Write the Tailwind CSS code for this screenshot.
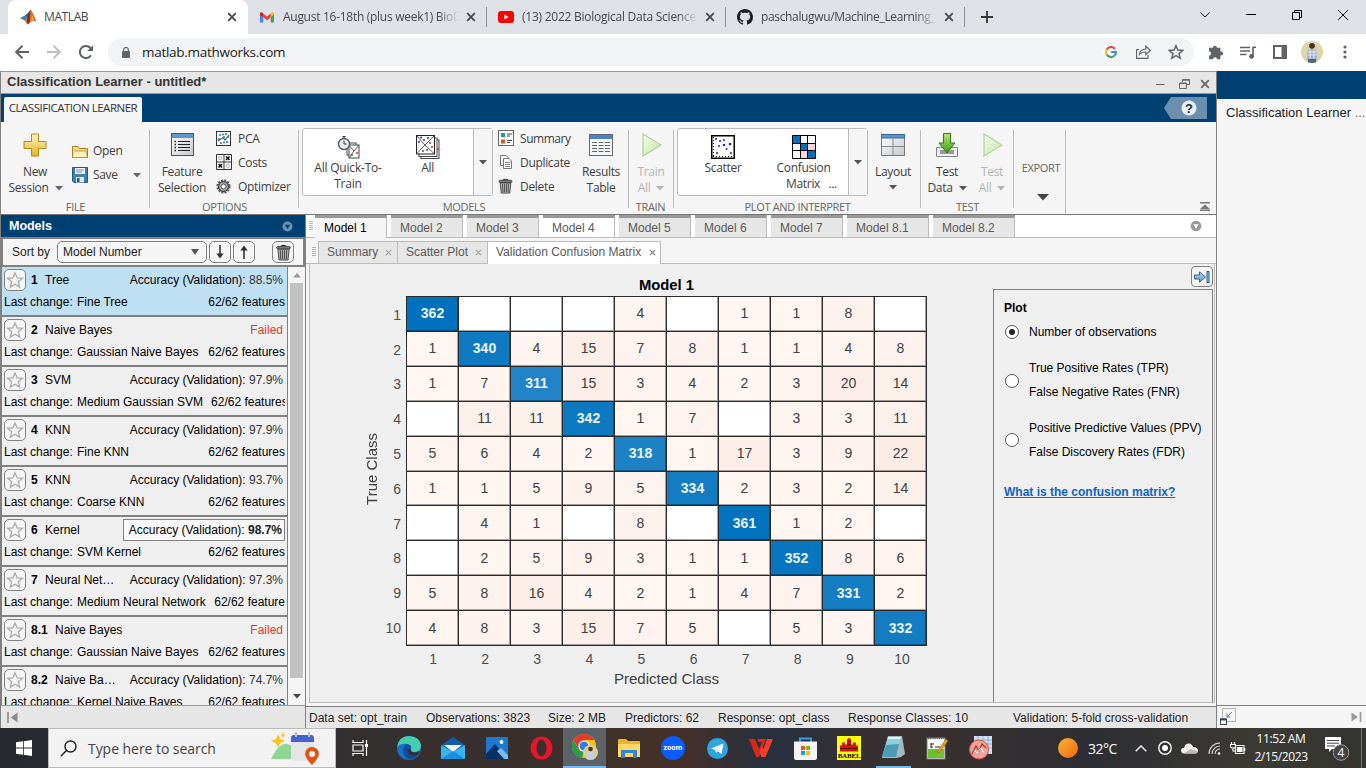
<!DOCTYPE html>
<html lang="en">
<head>
<meta charset="utf-8">
<title>MATLAB</title>
<script src="https://cdn.jsdelivr.net/npm/@tailwindcss/browser@4"></script>
</head>
<body class="w-[1366px] h-[768px] overflow-hidden bg-white font-['Liberation_Sans',Arial,sans-serif] text-[12px] text-black">
<svg width="0" height="0" class="absolute">
  <defs>
    <symbol id="x" viewBox="0 0 10 10"><path d="M1.2 1.2 8.8 8.8M8.8 1.2 1.2 8.8" stroke="currentColor" stroke-width="1.8" fill="none"/></symbol>
    <symbol id="down" viewBox="0 0 8 5"><path d="M0 0H8L4 4.5Z" fill="currentColor"/></symbol>
    <symbol id="star" viewBox="0 0 24 24"><path d="M12 2.5 14.8 9.1 22 9.7 16.5 14.4 18.2 21.4 12 17.6 5.8 21.4 7.5 14.4 2 9.7 9.2 9.1Z" fill="none" stroke="currentColor" stroke-width="1.7"/></symbol>
    <symbol id="grip" viewBox="0 0 4 10"><path d="M0 .5H4M0 2.5H4M0 4.5H4M0 6.5H4M0 8.5H4" stroke="#b5b5b5" stroke-width="1"/></symbol>
    <symbol id="trash" viewBox="0 0 16 18"><path d="M5 2.5Q8 .2 11 2.5" fill="none" stroke="#333" stroke-width="1.2"/><rect x=".7" y="2.5" width="14.6" height="2.6" rx="1.2" fill="#777" stroke="#333" stroke-width=".8"/><path d="M2 5.5H14L12.8 17H3.2Z" fill="#b4b4b4" stroke="#333" stroke-width=".9"/><path d="M4.6 6.5 5 16M6.9 6.5V16M9.1 6.5V16M11.4 6.5 11 16" stroke="#444" stroke-width="1"/></symbol>
    <linearGradient id="gold" x1="0" y1="0" x2="0" y2="1"><stop offset="0" stop-color="#fff7c8"/><stop offset="1" stop-color="#e8b21c"/></linearGradient>
    <linearGradient id="grn" x1="0" y1="0" x2="1" y2="1"><stop offset="0" stop-color="#f2fbe8"/><stop offset="1" stop-color="#c4e5a5"/></linearGradient>
    <linearGradient id="dl" x1="0" y1="0" x2="0" y2="1"><stop offset="0" stop-color="#b9e878"/><stop offset="1" stop-color="#3f9a17"/></linearGradient>
    <linearGradient id="blu" x1="0" y1="0" x2="0" y2="1"><stop offset="0" stop-color="#b9d9ef"/><stop offset="1" stop-color="#5f9bc8"/></linearGradient>
    <linearGradient id="wht" x1="0" y1="0" x2="1" y2="1"><stop offset="0" stop-color="#fff"/><stop offset="1" stop-color="#c4c8cc"/></linearGradient>
    <symbol id="play" viewBox="0 0 20 24"><path d="M1 1 19 12 1 23Z" fill="url(#grn)" stroke="#b3cf9c" stroke-width="1.2"/></symbol>
    <symbol id="save" viewBox="0 0 16 16"><path d="M.5.5H15.5V15.5H2L.5 14Z" fill="#3e7fb0" stroke="#26587f"/><rect x="3" y="1" width="10" height="6" fill="#eef4f8"/><path d="M4 3H12M4 5H10" stroke="#88a" /><rect x="4" y="10" width="8" height="5.5" fill="#dfe8ee"/><rect x="5" y="11" width="2.5" height="4" fill="#26587f"/></symbol>
  </defs>
</svg>

<!-- Browser tab strip -->
<header class="h-[34px] w-full flex bg-[#dee1e6] font-['Open_Sans',sans-serif] text-[12px] text-[#45494d]">
  <div class="ml-[8px] w-[240px] h-full rounded-t-[8px] bg-white flex items-center pl-[12px] pr-[11px]">
    <svg width="17" height="16" viewBox="0 0 17 16"><path d="M0 9 5 6.5 8 9 4.5 11.5Z" fill="#3b7fb5"/><path d="M5 6.5Q8 5 10.5.5L8.5 9.5Z" fill="#1c5c8a"/><path d="M10.5.5Q13 3 16.5 13 13 10.5 10 13.5L7.5 15.5 4.5 11.5 8.5 8.5Z" fill="#e4682a"/><path d="M10.5.5 9.5 13.5 7.5 15.5 7 10Z" fill="#8f2412"/><path d="M12 5 13.5 11 11.5 11.5Z" fill="#f9b54c"/></svg>
    <span class="ml-[7px] flex-1 tracking-[-0.4px]">MATLAB</span>
    <svg width="10" height="10"><use href="#x"/></svg>
  </div>
  <div class="w-[239px] flex items-center pl-[12px] pr-[10px] border-r border-[#8d9196] h-[20px] mt-[7px]">
    <svg width="14" height="11" viewBox="0 0 14 11"><path d="M0 1.5V10.6H3.2V4Z" fill="#4285f4"/><path d="M14 1.5V10.6H10.8V4Z" fill="#34a853"/><path d="M3.2 1.6 7 4.6 10.8 1.6V5.2L7 8.2 3.2 5.2Z" fill="#ea4335"/><path d="M0 1.5Q0 0 1.7.3L3.2 1.6V5.2L0 2.8Z" fill="#c5221f"/><path d="M14 1.5Q14 0 12.3.3L10.8 1.6V5.2L14 2.8Z" fill="#fbbc04"/></svg>
    <span class="ml-[9px] w-[176px] overflow-hidden whitespace-nowrap tracking-[-0.28px] [mask-image:linear-gradient(90deg,#000_88%,transparent)]">August 16-18th (plus week1) BioD</span>
    <svg class="ml-auto" width="10" height="10"><use href="#x"/></svg>
  </div>
  <div class="w-[239px] flex items-center pl-[11px] pr-[10px] border-r border-[#8d9196] h-[20px] mt-[7px]">
    <svg width="16" height="12" viewBox="0 0 16 12"><rect width="16" height="12" rx="3" fill="#f00"/><path d="M6.3 3.5 10.5 6 6.3 8.5Z" fill="#fff"/></svg>
    <span class="ml-[8px] w-[176px] overflow-hidden whitespace-nowrap tracking-[-0.25px] [mask-image:linear-gradient(90deg,#000_88%,transparent)]">(13) 2022 Biological Data Science</span>
    <svg class="ml-auto" width="10" height="10"><use href="#x"/></svg>
  </div>
  <div class="w-[239px] flex items-center pl-[11px] pr-[10px] border-r border-[#8d9196] h-[20px] mt-[7px]">
    <svg width="16" height="16" viewBox="0 0 16 16"><path fill="#1b1f24" d="M8 0C3.58 0 0 3.58 0 8c0 3.54 2.29 6.53 5.47 7.59.4.07.55-.17.55-.38 0-.19-.01-.82-.01-1.49-2.01.37-2.53-.49-2.69-.94-.09-.23-.48-.94-.82-1.13-.28-.15-.68-.52-.01-.53.63-.01 1.08.58 1.23.82.72 1.21 1.87.87 2.33.66.07-.52.28-.87.51-1.07-1.78-.2-3.64-.89-3.64-3.95 0-.87.31-1.59.82-2.15-.08-.2-.36-1.02.08-2.12 0 0 .67-.21 2.2.82.64-.18 1.32-.27 2-.27s1.36.09 2 .27c1.53-1.04 2.2-.82 2.2-.82.44 1.1.16 1.92.08 2.12.51.56.82 1.27.82 2.15 0 3.07-1.87 3.75-3.65 3.95.29.25.54.73.54 1.48 0 1.07-.01 1.93-.01 2.2 0 .21.15.46.55.38A8.01 8.01 0 0 0 16 8c0-4.42-3.58-8-8-8Z"/></svg>
    <span class="ml-[8px] w-[176px] overflow-hidden whitespace-nowrap tracking-[-0.35px] [mask-image:linear-gradient(90deg,#000_88%,transparent)]">paschalugwu/Machine_Learning_</span>
    <svg class="ml-auto" width="10" height="10"><use href="#x"/></svg>
  </div>
  <div class="flex items-center pl-[16px] text-[#333]"><svg width="12" height="12" viewBox="0 0 12 12"><path d="M6 0V12M0 6H12" stroke="currentColor" stroke-width="1.8"/></svg></div>
  <div class="ml-auto h-[29px] flex items-center text-black">
    <div class="w-[46px] flex justify-center"><svg width="10" height="6" viewBox="0 0 10 6"><path d="M.5.5 5 5 9.5.5" fill="none" stroke="currentColor"/></svg></div>
    <div class="w-[46px] flex justify-center"><svg width="10" height="1"><rect width="10" height="1"/></svg></div>
    <div class="w-[46px] flex justify-center"><svg width="10" height="10" viewBox="0 0 10 10"><path d="M.5 2.5H7.5V9.5H.5ZM2.5 2V.5H9.5V7.5H8" fill="none" stroke="currentColor"/></svg></div>
    <div class="w-[46px] flex justify-center"><svg width="10" height="10" viewBox="0 0 10 10"><path d="M0 0 10 10M10 0 0 10" stroke="currentColor"/></svg></div>
  </div>
</header>

<!-- Address bar -->
<div class="h-[37px] w-full flex items-center bg-white pl-[15px] pb-[1px] text-[#5f6368]">
  <svg width="14" height="14" viewBox="0 0 14 14"><path d="M7.5.8 1.2 7l6.3 6.2M1.2 7H14" fill="none" stroke="currentColor" stroke-width="1.9"/></svg>
  <svg class="ml-[18px] text-[#bdc0c3]" width="14" height="14" viewBox="0 0 14 14"><path d="M6.5.8 12.8 7l-6.3 6.2M12.8 7H0" fill="none" stroke="currentColor" stroke-width="1.9"/></svg>
  <svg class="ml-[18px]" width="15" height="14" viewBox="0 0 15 14"><path d="M12 10.2A6 6 0 1 1 11.4 3L13 4.6" fill="none" stroke="currentColor" stroke-width="2"/><path d="M14 .2V6H8.2Z" fill="currentColor"/></svg>
  <div class="ml-[14px] w-[1086px] h-[28px] rounded-full bg-[#f1f3f4] flex items-center pl-[14px] pr-[10px]">
    <svg width="8" height="11" viewBox="0 0 8 11"><rect y="4" width="8" height="7" rx="1" fill="currentColor"/><path d="M1.7 4.5V2.8a2.3 2.3 0 0 1 4.6 0V4.5" fill="none" stroke="currentColor" stroke-width="1.2"/></svg>
    <span class="ml-[12px] font-['Open_Sans',sans-serif] text-[13.5px] tracking-[-0.28px] text-[#202124]">matlab.mathworks.com</span>
    <div class="ml-auto flex items-center gap-[17px]">
      <span class="w-[16px] h-[16px] rounded-full bg-white flex items-center justify-center"><svg width="12" height="12" viewBox="0 0 12 12" fill="none" stroke-width="2.1"><path d="M10 2.9A5 5 0 0 0 1.7 3.6" stroke="#ea4335"/><path d="M1.7 3.6A5 5 0 0 0 1.7 8.4" stroke="#fbbc05"/><path d="M1.7 8.4A5 5 0 0 0 9.3 9.8" stroke="#34a853"/><path d="M9.3 9.8A5 5 0 0 0 11 6H6.2" stroke="#4285f4"/></svg></span>
      <svg width="15" height="14" viewBox="0 0 15 14" fill="none" stroke="currentColor" stroke-width="1.1"><path d="M3 4.5H.6V13.4H12V10"/><path d="M3.5 9.5Q4 4.3 9.8 4V1L14.4 5.5 9.8 9.5V7Q6 6.6 3.5 9.5Z"/></svg>
      <svg width="16" height="16" viewBox="0 0 24 24"><path d="M12 2.500 14.800 9.100 22 9.700 16.500 14.400 18.200 21.400 12 17.600 5.800 21.400 7.500 14.400 2 9.700 9.200 9.100Z" fill="none" stroke="currentColor" stroke-width="2.200"/></svg>
    </div>
  </div>
  <div class="flex items-center ml-[14px]">
    <svg width="16" height="16" viewBox="0 0 15 15"><path d="M1 3.500H4.600A1.900 1.900 0 1 1 8.400 3.500H11.600V7A1.900 1.900 0 1 1 11.600 10.600V14.300H8.500A1.900 1.900 0 1 0 4.700 14.300H1V11A1.900 1.900 0 1 0 1 7Z" fill="currentColor"/></svg>
    <svg class="ml-[16px]" width="16" height="13" viewBox="0 0 16 13"><path d="M0 1.500H10M0 5H10M0 8.500H6.500" stroke="currentColor" stroke-width="1.500"/><path d="M13 11V1.200H16" fill="none" stroke="currentColor" stroke-width="1.600"/><circle cx="11.500" cy="10.400" r="2.300" fill="currentColor"/></svg>
    <svg class="ml-[17px]" width="14" height="14" viewBox="0 0 14 14"><rect x="1" y="1" width="12" height="12" fill="none" stroke="currentColor" stroke-width="2"/><rect x="8.500" y="1" width="4.500" height="12" fill="currentColor"/></svg>
    <svg class="ml-[14px]" width="22" height="22" viewBox="0 0 22 22"><clipPath id="av"><circle cx="11" cy="11" r="11"/></clipPath><g clip-path="url(#av)"><rect width="22" height="22" fill="#ddd6a4"/><path d="M6 19V11Q6 8 11 8T16 11V19Z" fill="#a3b0d8"/><path d="M6.500 11H16M6.500 14H16M9 8.500V18M13 8.500V18" stroke="#e8ecf8" stroke-width=".9"/><circle cx="11" cy="4.800" r="2.900" fill="#4a3228"/><path d="M7 18H15V22H7Z" fill="#57607e"/></g></svg>
    <svg class="ml-[20px]" width="4" height="14" viewBox="0 0 4 14" fill="currentColor"><circle cx="2" cy="2" r="1.600"/><circle cx="2" cy="7" r="1.600"/><circle cx="2" cy="12" r="1.600"/></svg>
  </div>
</div>

<div class="h-[657px] w-full flex">
<!-- Classification Learner window -->
<div class="w-[1217px] h-full flex flex-col border-l border-r border-[#808080]">
  <div class="h-[23px] shrink-0 bg-[#e6e6e6] border-t border-b border-[#999] flex items-center pl-[6px] pr-[6px] text-[#333]">
    <span class="text-[13px] font-bold pb-[1px]">Classification Learner - untitled*</span>
    <div class="ml-auto flex items-center gap-[12px] pt-[3px] text-[#666]">
      <svg width="9" height="9" viewBox="0 0 9 9"><path d="M0 4.500H8.500" stroke="currentColor"/></svg>
      <svg class="ml-[2px] -mr-[2px]" width="11" height="10" viewBox="0 0 11 10" fill="none" stroke="currentColor"><path d="M3.500 3V.5H10.500V5.500H8"/><path d="M.5 4H7.500V9.500H.5ZM.5 4.600H7.500M3.500 1.200H10.500" /></svg>
      <svg width="10" height="10"><use href="#x"/></svg>
    </div>
  </div>
  <div class="h-[28px] shrink-0 bg-[#004073] flex items-end pl-[3px] pr-[9px]">
    <div class="w-[138px] h-[25px] rounded-t-[2px] bg-[#f5f5f5] flex items-center justify-center font-['Open_Sans',sans-serif] text-[11.500px] tracking-[-0.480px] text-[#333] whitespace-nowrap pb-[3px]">CLASSIFICATION LEARNER</div>
    <svg class="ml-auto mb-[3px]" width="43" height="22" viewBox="0 0 43 22"><path d="M0 11 7 0H43V22H7Z" fill="#6c8fae"/><circle cx="25" cy="11" r="7.500" fill="#fff"/><circle cx="25" cy="11" r="7.500" fill="#3a6d96" opacity=".12"/><text x="25" y="15.700" text-anchor="middle" font-family="Liberation Sans" font-size="13" font-weight="bold" fill="#20303e">?</text></svg>
  </div>

  <!-- Ribbon -->
  <div class="h-[93px] shrink-0 bg-[#f5f5f5] border-b border-[#777] flex font-['Open_Sans',sans-serif] text-[12px] leading-[16px] tracking-[-0.320px] text-[#404040]">
    <section class="w-[149px] flex flex-col">
      <div class="h-[78px] flex border-r border-[#bbb] mt-[8px]">
        <div class="w-[68px] -mt-[8px] pt-[11px] flex flex-col items-center">
          <svg width="24" height="24" viewBox="0 0 24 24"><path d="M8.500 1H15.500V8.500H23V15.500H15.500V23H8.500V15.500H1V8.500H8.500Z" fill="url(#gold)" stroke="#b5861a"/></svg>
          <span class="mt-[7px]">New</span><span class="flex items-center gap-[6px] pl-[1px]">Session <svg width="8" height="5" class="text-[#666]"><use href="#down"/></svg></span>
        </div>
        <div class="flex flex-col gap-[8px] pt-[13px] pl-[3px]">
          <div class="flex items-center gap-[5px]"><svg width="16" height="13" viewBox="0 0 16 13"><path d="M.5 1.500H6L7.500 3.500H15.500V12.500H.5Z" fill="#f4d67d" stroke="#a8822a"/><path d="M3 6H14L15.500 12.500H.8" fill="#fdf2b8" stroke="#a8822a" stroke-width=".7"/></svg>Open</div>
          <div class="flex items-center gap-[5px]"><svg width="16" height="16"><use href="#save"/></svg>Save<svg width="8" height="5" class="text-[#666] ml-[10px]"><use href="#down"/></svg></div>
        </div>
      </div>
      <div class="h-[14px] -mt-[8px] text-[11px] leading-[13px] text-center text-[#666]">FILE</div>
    </section>
    <section class="w-[149px] flex flex-col">
      <div class="h-[78px] flex border-r border-[#bbb] mt-[8px]">
        <div class="w-[64px] -mt-[8px] pt-[11px] flex flex-col items-center">
          <svg width="23" height="23" viewBox="0 0 23 23"><rect x=".5" y=".5" width="22" height="22" fill="url(#wht)" stroke="#4a5560"/><rect x="1" y="1" width="21" height="4" fill="#5f94cc"/><path d="M7 8.500H19M7 11.500H19M7 14.500H19M7 17.500H19" stroke="#222" stroke-width="1.200"/><path d="M3.500 8.500H5M3.500 11.500H5M3.500 14.500H5M3.500 17.500H5" stroke="#222" stroke-width="1.300"/></svg>
          <span class="mt-[8px]">Feature</span><span>Selection</span>
        </div>
        <div class="flex flex-col gap-[8px] pl-[2px]">
          <div class="flex items-center gap-[7px]"><svg width="15" height="15" viewBox="0 0 15 15"><rect x=".5" y=".5" width="14" height="14" fill="#fff" stroke="#333"/><path d="M2 10 7 6.500 9 9 13 4" fill="none" stroke="#555" stroke-width="1.200"/><g fill="#1478c8"><circle cx="4" cy="4" r="1"/><circle cx="7" cy="3.500" r="1"/><circle cx="10" cy="3" r="1"/><circle cx="12" cy="6" r="1"/><circle cx="3" cy="8" r="1"/><circle cx="5" cy="12" r="1"/><circle cx="8" cy="11.500" r="1"/><circle cx="11" cy="11" r="1"/><circle cx="8" cy="6" r="1"/></g></svg><span class="pt-[1px] -mb-[1px]">PCA</span></div>
          <div class="flex items-center gap-[6px]"><svg width="16" height="16" viewBox="0 0 16 16"><path d="M.5.5H15.500V15.500H.5ZM8 .5V15.500M.5 8H15.500" fill="#fff" stroke="#333"/><circle cx="4.200" cy="4.200" r="1.600" fill="none" stroke="#aaa"/><circle cx="11.800" cy="11.800" r="1.600" fill="none" stroke="#aaa"/><path d="M10 2.500 13.500 6M13.500 2.500 10 6M2.500 10 6 13.500M6 10 2.500 13.500" stroke="#000" stroke-width="1.400"/></svg><span class="pt-[1px] -mb-[1px]">Costs</span></div>
          <div class="flex items-center gap-[7px]"><svg width="15" height="15" viewBox="0 0 15 15"><circle cx="7.500" cy="7.500" r="5" fill="#bbb" stroke="#444" stroke-width="1.400"/><circle cx="7.500" cy="7.500" r="6.400" fill="none" stroke="#444" stroke-width="1.300" stroke-dasharray="2 1.350"/><circle cx="7.500" cy="7.500" r="2.600" fill="#f5f5f5" stroke="#444"/></svg><span class="pt-[1px] -mb-[1px]">Optimizer</span></div>
        </div>
      </div>
      <div class="h-[14px] -mt-[8px] text-[11px] leading-[13px] text-center text-[#666]">OPTIONS</div>
    </section>
    <section class="w-[330px] flex flex-col">
      <div class="h-[78px] flex border-r border-[#bbb] mt-[8px]">
        <div class="ml-[3px] -mt-[2px] w-[191px] h-[68px] border border-[#bbb] rounded-[3px] bg-white flex">
          <div class="w-[90px] pt-[6px] flex flex-col items-center text-center"><svg width="23" height="24" viewBox="0 0 23 24"><rect x="10" y="8" width="9" height="12" fill="#fff" stroke="#444"/><rect x="12" y="10" width="10" height="13" fill="#fff" stroke="#444"/><path d="M10 8 17 16 22 10M12 23 17 16" stroke="#444" fill="none" stroke-width=".9"/><circle cx="20" cy="18" r="1" fill="#e22"/><circle cx="15" cy="20" r="1" fill="#181"/><circle cx="7" cy="9" r="5.500" fill="#e8eef4" stroke="#555" stroke-width="1.400"/><path d="M7 5.500V9H9.500M5.500 1.500H8.500M7 1.500V3" stroke="#333" fill="none"/></svg><span class="mt-[1px] tracking-[-0.200px]">All Quick-To-<br>Train</span></div>
          <div class="w-[79px] pt-[6px] flex flex-col items-center -ml-[5px] mr-[5px]"><svg width="24" height="24" viewBox="0 0 24 24"><rect x="5" y="5" width="18" height="18.500" fill="#fff" stroke="#444"/><rect x="3" y="3" width="18" height="18.500" fill="#fff" stroke="#444"/><rect x=".5" y=".5" width="18" height="18.500" fill="#fff" stroke="#222"/><path d="M.5.5 9 10 18.500.5M.5 19 9 10 18.500 19" stroke="#444" fill="none" stroke-width=".9"/><g fill="#22e"><circle cx="5" cy="2.500" r="1"/><circle cx="8" cy="5" r="1"/><circle cx="12" cy="3" r="1"/><circle cx="3" cy="7" r="1"/></g><g fill="#e22"><circle cx="14" cy="8" r="1"/><circle cx="16" cy="12" r="1"/><circle cx="22" cy="14" r="1"/></g><g fill="#181"><circle cx="7" cy="16" r="1"/><circle cx="11" cy="15" r="1"/></g></svg><span class="mt-[1px]">All</span></div>
          <div class="ml-auto w-[19px] bg-[#f5f5f5] border-l border-[#bbb] flex items-center justify-center text-[#555]"><svg width="8" height="5"><use href="#down"/></svg></div>
        </div>
        <div class="flex flex-col gap-[8px] pl-[5px] w-[84px]">
          <div class="flex items-center gap-[6px]"><svg width="16" height="16" viewBox="0 0 16 16" class="shrink-0"><rect x=".5" y=".5" width="15" height="15" fill="#fff" stroke="#666"/><rect x="3" y="3" width="4" height="4" fill="#2090c8"/><rect x="3" y="9.500" width="4" height="4" fill="#d8552b"/><path d="M9 4H14M9 6H12M9 10.500H14M9 12.500H12" stroke="#444"/></svg><span class="pt-[1px] -mb-[1px] tracking-[-0.450px]">Summary</span></div>
          <div class="flex items-center gap-[6px]"><svg width="16" height="16" viewBox="0 0 16 16" class="shrink-0"><path d="M2.500 1.500H8L10.500 4V11.500H2.500Z" fill="#fff" stroke="#777"/><path d="M5.500 4.500H11L13.500 7V14.500H5.500Z" fill="#fff" stroke="#777"/><path d="M7 8.500H12M7 10.500H12M7 12.500H12" stroke="#888"/></svg><span class="pt-[1px] -mb-[1px]">Duplicate</span></div>
          <div class="flex items-center gap-[6px]"><svg width="15" height="16" class="shrink-0 mr-[1px]"><use href="#trash"/></svg><span class="pt-[1px] -mb-[1px]">Delete</span></div>
        </div>
        <div class="w-[48px] -mt-[8px] pt-[12px] flex flex-col items-center text-center"><svg width="24" height="22" viewBox="0 0 24 22"><rect x=".5" y=".5" width="23" height="21" fill="#f4f6f8" stroke="#667"/><rect x="1" y="1" width="22" height="4" fill="#4a84c2"/><path d="M3 8.500H21M3 11.500H21M3 14.500H21M3 17.500H21" stroke="#666" stroke-dasharray="5 1.500"/></svg><span class="mt-[8px]">Results</span><span>Table</span></div>
      </div>
      <div class="h-[14px] -mt-[8px] text-[11px] leading-[13px] text-center text-[#666]">MODELS</div>
    </section>
    <section class="w-[45px] flex flex-col">
      <div class="h-[78px] flex border-r border-[#bbb] mt-[8px]">
        <div class="w-[45px] -mt-[8px] pt-[11px] flex flex-col items-center text-[#b4b4b4]"><svg class="ml-[2px]" width="20" height="24"><use href="#play"/></svg><span class="mt-[7px]">Train</span><span class="flex items-center gap-[6px]">All <svg width="8" height="5"><use href="#down"/></svg></span></div>
      </div>
      <div class="h-[14px] -mt-[8px] text-[11px] leading-[13px] text-center text-[#666] -ml-[2px]">TRAIN</div>
    </section>
    <section class="w-[247px] flex flex-col">
      <div class="h-[78px] flex border-r border-[#bbb] mt-[8px]">
        <div class="ml-[3px] -mt-[2px] w-[191px] h-[68px] border border-[#bbb] rounded-[3px] bg-white flex">
          <div class="w-[90px] pt-[6px] flex flex-col items-center"><svg width="24" height="24" viewBox="0 0 24 24"><rect x=".75" y=".75" width="22.500" height="22.500" fill="#fff" stroke="#000" stroke-width="1.500"/><path d="M2.500 2V22M2 21.500H22" stroke="#000" stroke-dasharray="1 2"/><g fill="#22d"><circle cx="5" cy="4" r="1"/><circle cx="9" cy="6" r="1"/><circle cx="13" cy="5" r="1"/><circle cx="8" cy="11" r="1"/><circle cx="13" cy="10" r="1.300"/><circle cx="19" cy="9" r="1.300"/><circle cx="15.500" cy="14" r="1"/><circle cx="6" cy="18" r="1"/><circle cx="20" cy="18" r="1"/></g></svg><span class="mt-[1px]">Scatter</span></div>
          <div class="w-[71px] pt-[6px] flex flex-col items-center"><svg width="24" height="24" viewBox="0 0 24 24"><rect x=".75" y=".75" width="22.500" height="22.500" fill="#fff"/><path d="M1 1H8V8H1ZM8 8H16V16H8ZM16 16H23V23H16Z" fill="#0072bd"/><path d="M16 8H23V16H16ZM8 16H16V23H8Z" fill="#fbd5d5"/><path d="M.5.5H23.500V23.500H.5ZM8.500 1V23M15.500 1V23M1 8.500H23M1 15.500H23" fill="none" stroke="#000" stroke-width="1"/></svg><span class="mt-[1px]">Confusion</span><span class="whitespace-nowrap pl-[16px]">Matrix &nbsp; ...</span></div>
          <div class="ml-auto w-[19px] bg-[#f5f5f5] border-l border-[#bbb] flex items-center justify-center text-[#555]"><svg width="8" height="5"><use href="#down"/></svg></div>
        </div>
        <div class="w-[50px] -mt-[8px] pt-[12px] flex flex-col items-center"><svg width="24" height="22" viewBox="0 0 24 22"><rect x=".5" y=".5" width="23" height="21" fill="url(#wht)" stroke="#777"/><rect x=".5" y=".5" width="23" height="3.500" fill="#5f94cc" stroke="#37679a"/><path d="M12 4V21M1 12.500H23" stroke="#888"/></svg><span class="mt-[8px]">Layout</span><svg class="mt-[5px] text-[#555]" width="8" height="5"><use href="#down"/></svg></div>
      </div>
      <div class="h-[14px] -mt-[8px] text-[11px] leading-[13px] text-center text-[#666]">PLOT AND INTERPRET</div>
    </section>
    <section class="w-[93px] flex flex-col">
      <div class="h-[78px] flex border-r border-[#bbb] mt-[8px]">
        <div class="w-[52px] -mt-[8px] pt-[11px] flex flex-col items-center"><svg width="24" height="24" viewBox="0 0 24 24"><path d="M1.500 14.500H22.500V23.500H1.500Z" fill="#eee" stroke="#888"/><path d="M5 17H19V21H5Z" fill="#999"/><path d="M8.500.5H15.500V10H20L12 20 4 10H8.500Z" fill="url(#dl)" stroke="#2f7d12"/></svg><span class="mt-[7px]">Test</span><span class="flex items-center gap-[6px]">Data <svg class="text-[#555]" width="8" height="5"><use href="#down"/></svg></span></div>
        <div class="w-[38px] -mt-[8px] pt-[11px] flex flex-col items-center text-[#b4b4b4]"><svg class="ml-[1px]" width="20" height="24"><use href="#play"/></svg><span class="mt-[7px]">Test</span><span class="flex items-center gap-[6px]">All <svg width="8" height="5"><use href="#down"/></svg></span></div>
      </div>
      <div class="h-[14px] -mt-[8px] text-[11px] leading-[13px] text-center text-[#666]">TEST</div>
    </section>
    <section class="w-[52px] flex flex-col items-center mt-[8px] h-[84px] border-r border-[#bbb] text-[#666]">
      <span class="mt-[30px] ml-[3px] text-[11px]">EXPORT</span><svg class="mt-[18px] ml-[6px] text-[#444]" width="12" height="7" viewBox="0 0 12 7"><path d="M0 0H12L6 6.500Z" fill="currentColor"/></svg>
    </section>
    <div class="ml-auto flex items-end pb-[3px] pr-[6px] text-[#777]"><svg width="10" height="9" viewBox="0 0 10 9"><path d="M0 .75H10M0 8.250H10" stroke="currentColor" stroke-width="1.300"/><path d="M0 7 5 2.500 10 7Z" fill="currentColor"/></svg></div>
  </div>

  <div class="flex-1 flex min-h-0">
    <!-- Models panel -->
    <aside class="w-[305px] flex flex-col border-r border-[#808080] bg-[#f5f5f5]">
      <div class="h-[22px] shrink-0 bg-[#004073] flex items-center justify-between pl-[8px] pr-[12px] text-white font-bold text-[12.600px] tracking-[-0.100px]">Models<svg width="11" height="11" viewBox="0 0 11 11"><circle cx="5.500" cy="5.500" r="5" fill="#6c8fae"/><path d="M2.800 3.800H8.200L5.500 8Z" fill="#004073"/></svg></div>
      <div class="h-[30px] shrink-0 bg-[#f5f5f5] border-2 border-[#808080] flex items-center pl-[9px] text-[#222]">
        <span class="w-[45px]">Sort by</span>
        <div class="w-[150px] h-[22px] rounded-[5px] border border-[#808080] flex items-center justify-between pl-[5px] pr-[7px]">Model Number<svg width="8" height="6" viewBox="0 0 8 6"><path d="M0 0H8L4 6Z" fill="#555"/></svg></div>
        <div class="ml-[2px] w-[22px] h-[22px] rounded-[5px] border border-[#808080] flex items-center justify-center"><svg width="8" height="14" viewBox="0 0 8 14"><path d="M4 0V11" stroke="#333" stroke-width="1.600"/><path d="M.3 8.500H7.700L4 13.500Z" fill="#333"/></svg></div>
        <div class="ml-[2px] w-[22px] h-[22px] rounded-[5px] border border-[#808080] flex items-center justify-center"><svg width="8" height="14" viewBox="0 0 8 14"><path d="M4 14V3" stroke="#333" stroke-width="1.600"/><path d="M.3 5.500H7.700L4 .5Z" fill="#333"/></svg></div>
        <div class="ml-[17px] w-[22px] h-[22px] rounded-[5px] border border-[#808080] flex items-center justify-center"><svg width="15" height="17"><use href="#trash"/></svg></div>
      </div>
      <div class="flex-1 min-h-0 flex border-l border-[#808080] overflow-hidden">
        <div id="models" class="w-[286px] h-full overflow-hidden border-r border-[#808080]"></div>
        <div class="w-[17px] flex flex-col items-center bg-[#f5f5f5] pt-[6px]">
          <svg width="8" height="5" viewBox="0 0 8 5"><path d="M0 4.500H8L4 0Z" fill="#999"/></svg>
          <div class="mt-[5px] w-[13px] h-[395px] bg-[#c1c1c1]"></div>
          <svg class="mt-[16px] text-[#444]" width="8" height="5"><use href="#down"/></svg>
        </div>
      </div>
      <div class="h-[23px] shrink-0 bg-[#e6e6e6] border-t border-[#999] flex items-center pl-[6px]"><svg width="11" height="11" viewBox="0 0 11 11"><path d="M1 0V11" stroke="#888" stroke-width="1.600"/><path d="M10.500.5V10.500L4 5.500Z" fill="#888"/></svg></div>
    </aside>

    <!-- Documents -->
    <main class="flex-1 min-w-0 flex flex-col bg-[#f5f5f5]">
      <div class="h-[23px] shrink-0 bg-white border-b border-[#bbb] flex pl-[3px] text-[#595959] relative">
        <svg class="mt-[6px] mr-[2px]" width="4" height="10"><use href="#grip"/></svg>
        <div id="doctabs" class="flex gap-[4px]"></div>
        <svg class="ml-auto mr-[14px] mt-[5px]" width="12" height="12" viewBox="0 0 12 12"><circle cx="6" cy="6" r="5.300" fill="#999"/><path d="M3.300 4.300H8.700L6 8.700Z" fill="#fff"/></svg>
      </div>
      <div class="h-[26px] shrink-0 flex items-end pl-[6px] text-[#595959] border-b border-[#bbb]">
        <svg class="mb-[6px] mr-[2px]" width="4" height="10"><use href="#grip"/></svg>
        <div class="w-[80px] h-[22px] bg-[#e6e6e6] border border-b-0 border-[#bbb] flex items-center justify-between pl-[8px] pr-[5px] pb-[2px]">Summary<svg class="text-[#aaa] mt-[2px]" width="7" height="7"><use href="#x"/></svg></div>
        <div class="w-[90px] h-[22px] bg-[#e6e6e6] border border-l-0 border-b-0 border-[#bbb] flex items-center justify-between pl-[8px] pr-[5px] pb-[2px]">Scatter Plot<svg class="text-[#aaa] mt-[2px]" width="7" height="7"><use href="#x"/></svg></div>
        <div class="w-[173px] h-[23px] -mb-[1px] bg-white border border-l-0 border-b-0 border-[#bbb] flex items-center justify-between pl-[8px] pr-[4px] pb-[3px]">Validation Confusion Matrix<svg class="text-[#888] mt-[2px]" width="7" height="7"><use href="#x"/></svg></div>
      </div>
      <div class="h-[439px] ml-[3px] mr-[1px] shrink-0 bg-[#efefef] border-l border-b border-r border-[#bbb] flex">
        <div class="w-[683px] flex flex-col">
          <div class="mt-[12px] ml-[96px] w-[521px] h-[20px] leading-[18px] text-center font-bold text-[14.800px]">Model 1</div>
          <div class="flex h-[350px]">
            <div class="w-[70px] flex items-center justify-end"><span class="[writing-mode:vertical-rl] rotate-180 text-[15px] leading-[18px] text-[#404040] mr-[-1px] mt-[-4px]">True Class</span></div>
            <div id="rows" class="w-[21px] mr-[5px] grid grid-rows-10 text-right text-[14px] text-[#4d4d4d] pt-[2px]"></div>
            <div id="cm" class="w-[521px] h-[350px] bg-[#2b2b2b] p-[1px] grid grid-cols-10 grid-rows-10 gap-[1px] text-[14px] text-[#404040]"></div>
          </div>
          <div id="cols" class="ml-[97px] mt-[3px] w-[521px] h-[20px] leading-[20px] grid grid-cols-10 text-center text-[14px] text-[#4d4d4d]"></div>
          <div class="ml-[96px] w-[521px] h-[20px] leading-[20px] text-center text-[15px] text-[#404040]">Predicted Class</div>
        </div>
        <div class="flex-1 flex flex-col pr-[1px]">
          <div class="h-[25px] shrink-0 flex justify-end pt-[2px]"><div class="w-[22px] h-[21px] rounded-[4px] border border-[#808080] bg-[#f5f5f5] flex items-center justify-center"><svg width="16" height="12" viewBox="0 0 16 12"><path d="M.5 4H5.500V.8L11.500 6 5.500 11.200V8H.5Z" fill="url(#blu)" stroke="#35648c"/><rect x="13" y=".5" width="2" height="11" fill="#8ab8dc" stroke="#35648c"/></svg></div></div>
          <div class="flex-1 border border-b-0 border-[#808080] pl-[10px]">
            <div class="mt-[11px] h-[14px] leading-[14px] font-bold">Plot</div>
            <div class="mt-[7px] h-[20px] flex items-center"><span class="ml-[1px] w-[14px] h-[14px] rounded-full border border-[#555] bg-white flex items-center justify-center"><i class="w-[6px] h-[6px] rounded-full bg-[#222]"></i></span><span class="ml-[10px]">Number of observations</span></div>
            <div class="mt-[14px] h-[48px] flex items-center"><span class="ml-[1px] mt-[2px] w-[14px] h-[14px] rounded-full border border-[#555] bg-white"></span><span class="ml-[10px] leading-[24px] whitespace-nowrap">True Positive Rates (TPR)<br>False Negative Rates (FNR)</span></div>
            <div class="mt-[12px] h-[48px] flex items-center"><span class="ml-[1px] w-[14px] h-[14px] rounded-full border border-[#555] bg-white"></span><span class="ml-[10px] leading-[24px] whitespace-nowrap">Positive Predictive Values (PPV)<br>False Discovery Rates (FDR)</span></div>
            <div class="mt-[20px] leading-[16px] font-bold underline text-[#0f62c8]">What is the confusion matrix?</div>
          </div>
        </div>
      </div>
      <div class="mt-auto h-[22px] shrink-0 bg-[#e6e6e6] border-t border-[#808080] flex items-center text-[#222] pl-[3px] whitespace-nowrap">
        <span class="w-[117px]">Data set: opt_train</span><span class="w-[122px]">Observations: 3823</span><span class="w-[77px]">Size: 2 MB</span><span class="w-[93px]">Predictors: 62</span><span class="w-[130px]">Response: opt_class</span><span class="w-[165px]">Response Classes: 10</span><span>Validation: 5-fold cross-validation</span>
      </div>
    </main>
  </div>
</div>
<!-- Neighbouring pane -->
<div class="w-[149px] h-full flex flex-col bg-[#f5f5f5]">
  <div class="h-[28px] bg-[#004073]"></div>
  <div class="pt-[6px] pl-[9px] leading-[16px] text-[13px] whitespace-nowrap text-[#222]">Classification Learner <span class="text-[#8a6a4a]">...</span></div>
  <div class="mt-auto h-[23px] border-t border-[#808080] flex items-center justify-between pl-[3px] pr-[4px]">
    <svg width="16" height="18" viewBox="0 0 16 18"><rect x="2.500" y=".5" width="13" height="13" fill="none" stroke="#777" stroke-dasharray="1 1"/><path d="M12 4 7 9M7 5.500V9H10.500" fill="none" stroke="#777"/><rect x=".5" y="11" width="6" height="5.500" fill="#fff" stroke="#345"/><path d="M.5 11.500H6.500" stroke="#345" stroke-width="2"/></svg>
    <svg width="11" height="10" viewBox="0 0 11 10"><path d="M.5.500V9.500L7 5Z" fill="#999"/><path d="M9.500 0V10" stroke="#999" stroke-width="1.600"/></svg>
  </div>
</div>
</div>

<!-- Taskbar -->
<footer class="h-[40px] w-full flex items-center bg-[linear-gradient(90deg,#26292e_0%,#332f30_25%,#3a302c_40%,#453029_50%,#28303f_56%,#3a302f_66%,#2d2e33_80%,#3c3a34_92%,#33332f_100%)] text-white font-['Open_Sans',sans-serif]">
  <div class="w-[48px] flex justify-center"><svg width="16" height="16" viewBox="0 0 16 16" fill="#fff"><path d="M0 2.300 7 1.300V7.600H0ZM7.800 1.200 16 0V7.600H7.800ZM0 8.400H7V14.700L0 13.700ZM7.800 8.400H16V16L7.800 14.800Z"/></svg></div>
  <div class="w-[288px] h-[40px] bg-[#f2f2f2] border border-[#bbb] flex items-center pl-[11px] pr-[14px] text-[#444]">
    <svg width="17" height="17" viewBox="0 0 17 17"><circle cx="10.500" cy="6.500" r="5.500" fill="none" stroke="#222" stroke-width="1.400"/><path d="M6.500 10.500 .8 16.300" stroke="#222" stroke-width="1.400"/></svg>
    <span class="ml-[11px] text-[14px] tracking-[-0.050px]">Type here to search</span>
    <svg class="ml-auto" width="50" height="36" viewBox="0 0 50 36"><path d="M0 29Q12 4 24 20V29Z" fill="#8fd694"/><path d="M7 4 9 9 14 11 9 13 7 18 5 13 0 11 5 9Z" fill="#ffc414"/><path d="M12 2 13 4.500 15 5 13 6 12 8 11 6 9.500 5 11 4.500Z" fill="#ffc414"/><rect x="20" y="6" width="23" height="25" rx="3" fill="#e4e4e9"/><path d="M20 12V8Q20 5 23 5H40Q43 5 43 8V12Z" fill="#4663d0"/><path d="M25 2V7M38 2V7" stroke="#b9c0d4" stroke-width="2"/><path d="M34 24A7 7 0 1 1 48 24Q47 29 41 35 35 29 34 24Z" fill="#e85211"/><circle cx="41" cy="24" r="3" fill="#fff"/></svg>
  </div>
  <div class="w-[51px] flex justify-center pr-[3px]"><svg width="17" height="16" viewBox="0 0 17 16" fill="none" stroke="#fff" stroke-width="1.200"><path d="M1 0V2.500H11V0M1 16V13.500H11V16M1 5H11V11H1ZM14.500 0V16"/><path d="M13 4H16V7H13Z" fill="#fff" stroke="none"/></svg></div>
  <div class="w-[44px] flex justify-center"><svg width="24" height="24" viewBox="0 0 24 24"><circle cx="12" cy="12" r="12" fill="#1672c4"/><path d="M0 11Q2 0 12 0 24 1 24 11 23 16 17 16 13 16 14 13 15 9 10 8 4 7 0 11Z" fill="#45cdb0"/><path d="M10 8Q15 9 14 13 13 16 17 17 20 17.500 22.500 15.500 19 24 11 23 6 20 6 14 6.500 9.500 10 8Z" fill="#0f4c9c"/><path d="M14 13Q13 17 19 16.500L22.500 15Q23 18 19 19.500 11 20 10.500 14Z" fill="#332f30"/></svg></div>
  <div class="w-[44px] flex justify-center"><svg width="24" height="22" viewBox="0 0 24 22"><path d="M0 8 12 0 24 8V22H0Z" fill="#0f5ea8"/><path d="M3 8H21L12 15Z" fill="#fff"/><path d="M0 8 12 15 24 8V22H0Z" fill="#35b5ee"/><path d="M0 22 12 14 24 22Z" fill="#1c8fe0"/></svg></div>
  <div class="w-[44px] flex justify-center"><svg width="22" height="22" viewBox="0 0 22 22"><rect width="22" height="22" rx="1" fill="#1d78cf"/><path d="M0 22V17L9 7 22 22Z" fill="#0a2f63"/><path d="M11 14 15 11 22 18V22H18Z" fill="#7ab8ee"/><circle cx="15.500" cy="5" r="1.900" fill="#fff"/></svg></div>
  <div class="w-[44px] flex justify-center"><svg width="23" height="24" viewBox="0 0 23 24"><path fill-rule="evenodd" d="M11.500.5A11 11.500 0 1 0 11.500 23.500 11 11.500 0 1 0 11.500.5ZM11.500 3.500A5 8.500 0 1 1 11.500 20.500 5 8.500 0 1 1 11.500 3.500Z" fill="#e8152b"/></svg></div>
  <div class="w-[43px] h-full flex items-center justify-center bg-[#5d6168] border-b-2 border-[#76b9ed]"><svg width="26" height="26" viewBox="0 0 26 26"><circle cx="12" cy="12" r="12" fill="#fbc116"/><path d="M1.600 6A12 12 0 0 1 22.400 6H12Q7 7 6.800 15Z" fill="#e33b2e"/><path d="M1.600 6 6.800 15Q9 18 12 17.500L10 24A12 12 0 0 1 1.600 6Z" fill="#2a9d4a"/><circle cx="12" cy="12" r="5.600" fill="#fff"/><circle cx="12" cy="12" r="4.500" fill="#2e7de9"/><circle cx="18.500" cy="18.500" r="7.500" fill="#d6cf94"/><path d="M15 25.500V18H22V25.500Z" fill="#c3cde6"/><circle cx="18.500" cy="15" r="2.300" fill="#49352c"/></svg></div>
  <div class="w-[45px] flex justify-center"><svg width="22" height="19" viewBox="0 0 22 19"><path d="M0 1Q0 0 1 0H8L10 2H21Q22 2 22 3V18H0Z" fill="#f0b429"/><path d="M0 5H22V18H0Z" fill="#ffd867"/><path d="M3 19V11H19V19H15V14H7V19Z" fill="#2f86d6"/></svg></div>
  <div class="w-[44px] flex justify-center"><div class="w-[24px] h-[24px] rounded-full bg-[#0b5cff] flex items-center justify-center text-[7px] font-bold">zoom</div></div>
  <div class="w-[44px] flex justify-center"><svg width="21" height="21" viewBox="0 0 21 21"><circle cx="10.500" cy="10.500" r="10.500" fill="#2ca5e0"/><path d="M4 10.500 16.500 5.500 14.500 16 10.800 13.300 9 15 8.500 12Z" fill="#fff"/><path d="M8.500 12 14 7.500 9.600 12.600 9 15Z" fill="#b8d8ee"/></svg></div>
  <div class="w-[44px] flex justify-center"><svg width="24" height="19" viewBox="0 0 24 19"><path d="M0 0H6L10 10 13 3H9V0H17L10 18H7Z" fill="#d9281a"/><path d="M18 0H24L16.500 18H12.500L10.500 13 13 7 14.500 10Z" fill="#f0402c"/></svg></div>
  <div class="w-[44px] flex justify-center"><svg width="23" height="23" viewBox="0 0 23 23"><path d="M6 5V1.500H17V5" fill="none" stroke="#2fa0e8" stroke-width="2"/><path d="M0 4.500H23V21Q23 23 21 23H2Q0 23 0 21Z" fill="#f4f4f4"/><path d="M7 9H11V13H7Z" fill="#f25022"/><path d="M12 9H16V13H12Z" fill="#7fba00"/><path d="M7 14H11V18H7Z" fill="#00a4ef"/><path d="M12 14H16V18H12Z" fill="#ffb900"/></svg></div>
  <div class="w-[44px] flex justify-center"><div class="w-[24px] h-[24px] bg-[#ffff00] flex flex-col items-center justify-between pt-[1px] text-black"><svg width="22" height="15" viewBox="0 0 22 14"><path d="M2 14V8H4V5H7V7H9V2L11 0 13 2V7H15V5H18V8H20V14Z" fill="#d31212"/><path d="M2 11H20M9 4H13M9 7H13" stroke="#5a0808" stroke-width="1"/></svg><span class="font-['Liberation_Serif',serif] font-bold text-[7px] leading-[8px] tracking-[-0.200px]">BABEL</span></div></div>
  <div class="w-[44px] h-full flex items-center justify-center"><div class="w-[35px] h-full border-b-2 border-[#76b9ed] flex items-center justify-center"><svg width="23" height="22" viewBox="0 0 23 22"><path d="M6 0H20L23 18 19 21 14 22H0Z" fill="#9fb8c2"/><path d="M6 1H19L14 21H0Z" fill="#8fd0e0"/><path d="M4 9 17 8 14 21H0Z" fill="#4d9bb4"/><path d="M6 1H19L18.500 3H5.500Z" fill="#e4eef2"/></svg></div></div>
  <div class="w-[44px] flex justify-center"><svg width="22" height="24" viewBox="0 0 22 24"><rect x="1" y="2" width="18" height="21" fill="#fff" stroke="#777"/><path d="M2 13H18V22H2Z" fill="#6cc22e"/><path d="M2 2H18" stroke="#555" stroke-width="2.500" stroke-dasharray="1 1.200"/><path d="M5 8H8M5 11H7M9 11H14M5 7V12" stroke="#222"/><path d="M11 16 20 3 22 5 13 17Z" fill="#f4a21a" stroke="#8a5a10" stroke-width=".6"/></svg></div>
  <div class="w-[44px] flex justify-center"><svg width="24" height="24" viewBox="0 0 24 24"><rect x="5" y="0" width="18" height="18" fill="#cfe2f5"/><path d="M5 4H23M5 8H23M5 12H23M9 0V18M14 0V18M19 0V18" stroke="#88a8cc" stroke-width=".8"/><circle cx="10" cy="13.500" r="9.500" fill="#eda29c" stroke="#d8564c"/><path d="M3 18 7 10 10 15 13 8 17 12" stroke="#c8241c" fill="none" stroke-width="1.200"/><path d="M5 14 8 17 12 12 15 17" stroke="#fff" fill="none"/></svg></div>
  <div class="ml-[55px] w-[20px] h-[20px] rounded-full bg-[linear-gradient(135deg,#f9b233,#ee6a16)]"></div>
  <span class="ml-[10px] w-[46px] text-[14px] tracking-[-0.500px]">32°C</span>
  <svg class="ml-[1px]" width="12" height="7" viewBox="0 0 12 7"><path d="M.7 6.300 6 1 11.300 6.300" fill="none" stroke="#fff" stroke-width="1.300"/></svg>
  <svg class="ml-[11px]" width="14" height="14" viewBox="0 0 14 14"><circle cx="7" cy="7" r="6.200" fill="none" stroke="#fff" stroke-width="1.400"/><circle cx="7" cy="7" r="3" fill="#fff"/></svg>
  <svg class="ml-[9px]" width="17" height="11" viewBox="0 0 17 11"><path d="M3 10.500Q0 10 0 7.500 0 5 3 4.800 4 .5 8 .5 11 .5 12 4 17 4 17 7.500 17 10.500 14 10.500Z" fill="#eee"/><path d="M3 10.500 10 6 17 8.500Q16.500 10.500 14 10.500Z" fill="#bbb"/></svg>
  <svg class="ml-[10px]" width="13" height="13" viewBox="0 0 13 13" fill="none" stroke="#ddd" stroke-width="1.100"><path d="M1 12A11 11 0 0 1 12 1M4 12A8 8 0 0 1 12 4M7 12A5 5 0 0 1 12 7"/><circle cx="11" cy="11.500" r="1.300" fill="#fff" stroke="none"/></svg>
  <svg class="ml-[9px]" width="16" height="13" viewBox="0 0 16 13" fill="none" stroke="#fff" stroke-width="1.100"><path d="M5.500 3.500H14V11.500H5.500Z"/><path d="M7.500 5.500H12V9.500H7.500Z" fill="#fff"/><path d="M14.500 6V9" stroke-width="1.600"/><path d="M1.500 0V2M4.500 0V2M.5 2.500H5.500V5Q5.500 6 3 6 .5 6 .5 5ZM3 6V9H5"/></svg>
  <div class="w-[70px] text-center text-[12px] leading-[18px] whitespace-nowrap tracking-[-0.400px]"><div>11:52 AM</div><div>2/15/2023</div></div>
  <svg class="ml-auto mr-[11px]" width="26" height="26" viewBox="0 0 26 26"><path d="M1 2H17V14H8L5 17V14H1Z" fill="#fff"/><path d="M3 5.500H15M3 8.200H15M3 11H11" stroke="#444"/><circle cx="17" cy="17.500" r="7.800" fill="#444" stroke="#999"/><text x="17" y="22" text-anchor="middle" font-family="Open Sans" font-size="12" fill="#fff">4</text></svg>
  <div class="w-px h-full bg-[#777] mr-[4px]"></div>
</footer>

<script>
const models = [
  ['1','Tree','88.5%','Fine Tree'],['2','Naive Bayes','','Gaussian Naive Bayes'],['3','SVM','97.9%','Medium Gaussian SVM'],
  ['4','KNN','97.9%','Fine KNN'],['5','KNN','93.7%','Coarse KNN'],['6','Kernel','98.7%','SVM Kernel'],
  ['7','Neural Net…','97.3%','Medium Neural Network'],['8.1','Naive Bayes','','Gaussian Naive Bayes'],['8.2','Naive Ba…','74.7%','Kernel Naive Bayes']];
document.getElementById('models').innerHTML = models.map(([n,name,acc,last],i) => `
  <div class="h-[50px] border-b-2 border-[#808080] flex flex-col overflow-hidden whitespace-nowrap ${i===0?'bg-[#bfdff2]':'bg-[#efefef]'}">
    <div class="flex items-center h-[26px] pl-[2px]">
      <span class="w-[22px] h-[22px] rounded-[5px] border border-[#808080] flex items-center justify-center text-[#aaa] bg-[#f5f5f5]"><svg width="18" height="18"><use href="#star"/></svg></span>
      <b class="ml-[5px] ${n.length>1?'w-[24px]':'w-[14px]'}">${n}</b><span>${name}</span>
      ${!acc?'<span class="ml-auto mr-[4px] text-[#e03c31]">Failed</span>':
        n==='6'?`<span class="ml-auto mr-[2px] h-[22px] bg-[#f8f8f8] border border-[#808080] flex items-center pl-[5px] pr-[2px]">Accuracy (Validation):&nbsp;<b class="text-[#222]">${acc}</b></span>`:
        `<span class="ml-auto mr-[4px]">Accuracy (Validation): <span class="text-[#333]">${acc}</span></span>`}
    </div>
    <div class="flex items-center h-[18px] pl-[2px] pr-[2px]"><div class="flex w-full overflow-hidden"><span class="w-[73px] shrink-0">Last change:</span><span class="shrink-0">${last}</span><span class="ml-auto pl-[8px] shrink-0">62/62 ${n==='7'?'feature':'features'}</span></div></div>
  </div>`).join('');
document.getElementById('doctabs').innerHTML = ['1','2','3','4','5','6','7','8.1','8.2'].map((n,i) =>
  `<div class="${n.length>1?'w-[82px]':'w-[72px]'} border-t-[3px] border-t-[#999] border-r border-r-[#bbb] pl-[9px] leading-[20px] ${i===0?'bg-[#f5f5f5] text-black h-[23px]':i===3?'bg-white h-[22px]':'bg-[#e6e6e6] h-[22px]'}">Model ${n}</div>`).join('');
const cm = [
  [362,0,0,0,4,0,1,1,8,0],[1,340,4,15,7,8,1,1,4,8],[1,7,311,15,3,4,2,3,20,14],[0,11,11,342,1,7,0,3,3,11],
  [5,6,4,2,318,1,17,3,9,22],[1,1,5,9,5,334,2,3,2,14],[0,4,1,0,8,0,361,1,2,0],[0,2,5,9,3,1,1,352,8,6],
  [5,8,16,4,2,1,4,7,331,2],[4,8,3,15,7,5,0,5,3,332]];
const shade = (v, d) => {
  if (!v) return '#fff';
  if (d) { const t = (362 - v) / 51; return `rgb(${Math.round(t*34)},${Math.round(114+t*18)},${Math.round(189+t*9)})`; }
  return `rgb(${Math.round(255-v*.2)},${Math.round(246-v*.45)},${Math.round(242-v*.55)})`;
};
document.getElementById('cm').innerHTML = cm.flatMap((r,i) => r.map((v,j) =>
  `<div class="flex items-center justify-center pt-[1px] pl-[1px] border-r border-b border-black/35 ${i===j?'text-white/90 font-bold':''}" style="background-color:${shade(v,i===j)}">${v||''}</div>`)).join('');
const digits = Array.from({length:10}, (_,i) => i+1);
document.getElementById('rows').innerHTML = digits.map(n => `<div class="flex items-center justify-end">${n}</div>`).join('');
document.getElementById('cols').innerHTML = digits.map(n => `<div>${n}</div>`).join('');
</script>
</body>
</html>
